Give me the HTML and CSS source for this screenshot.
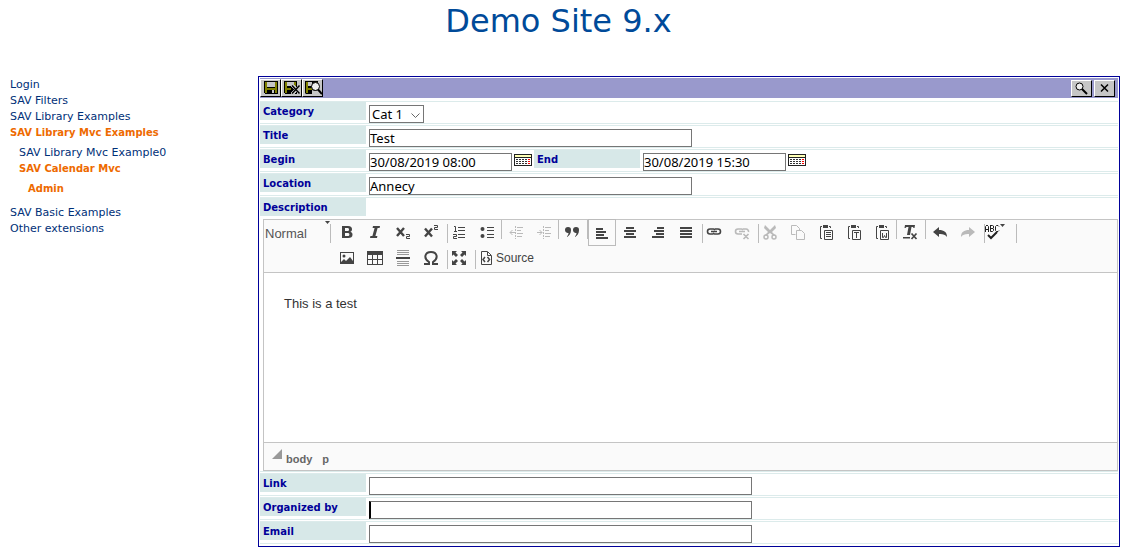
FILE: index.html
```html
<!DOCTYPE html>
<html lang="en">
<head>
<meta charset="utf-8">
<title>Demo Site 9.x</title>
<link rel="stylesheet" href="styles.css">
</head>
<body>
<header class="site-header"><h1>Demo Site 9.x</h1></header>
<div class="layout">
<nav class="menu">
  <ul>
    <li><a href="#">Login</a></li>
    <li><a href="#">SAV Filters</a></li>
    <li><a href="#">SAV Library Examples</a></li>
    <li><a href="#" class="active">SAV Library Mvc Examples</a>
      <ul>
        <li><a href="#">SAV Library Mvc Example0</a></li>
        <li><a href="#" class="active">SAV Calendar Mvc</a>
          <ul><li><a href="#" class="active">Admin</a></li></ul>
        </li>
      </ul>
    </li>
    <li><a href="#">SAV Basic Examples</a></li>
    <li><a href="#">Other extensions</a></li>
  </ul>
</nav>
<main class="panel">
<form>
  <div class="bar">
    <div class="bar-left">
      <button type="button" class="tool" aria-label="Save"><svg width="18" height="15" shape-rendering="crispEdges"><path d="M3 1h14v13H4l-1-1z"/><path fill="#808000" d="M4 2h2v6h8V2h2v11h-2V10H6v3H4z"/><path fill="#c6c6c6" d="M6 2h8v5H6zM11 10h2v3h-2z"/></svg></button>
      <button type="button" class="tool" aria-label="Save and close"><svg width="19" height="15" shape-rendering="crispEdges"><path d="M2 1h13v13H3l-1-1z"/><path fill="#808000" d="M3 2h2v6h7V2h2v6H9v2H5v3H3z"/><path fill="#c6c6c6" d="M5 2h7v4H5zM9 5h3l2 2 2-2h3v9h-3l-2-2-2 2H9v-2l3-3-3-2z"/><path fill="none" stroke="#000" stroke-width="1.500" shape-rendering="auto" d="M10 5.500l7.500 8M17.500 5.500l-7.500 8"/></svg></button>
      <button type="button" class="tool" aria-label="Save and show"><svg width="19" height="15"><path d="M2 1h13v13H3l-1-1z"/><path fill="#808000" d="M3 2h2v6h7V2h2v6H9v2H5v3H3z"/><path fill="#c6c6c6" d="M5 2h4v4H5zM9 10l3 1 3-1 3 3-1 2H9z"/><circle cx="12.500" cy="6.500" r="4" fill="#eee" stroke="#000"/><path stroke="#000" stroke-width="2" d="M15 9.500l4 4.500"/></svg></button>
    </div>
    <div class="bar-right">
      <button type="button" class="tool" aria-label="Show"><svg width="18" height="14"><circle cx="7.500" cy="5.500" r="3.500" fill="#eee" stroke="#000"/><path stroke="#000" stroke-width="2" d="M10 8l5 5"/></svg></button>
      <button type="button" class="tool" aria-label="Close"><svg width="18" height="14"><path fill="none" stroke="#000" stroke-width="1.500" d="M6 3.500l7 7M13 3.500l-7 7"/></svg></button>
    </div>
  </div>

  <div class="row"><label class="name" for="category">Category</label><span class="pick"><select id="category"><option>Cat 1</option></select><svg class="chevron" width="9" height="5"><path d="M.5.5l4 4 4-4" fill="none" stroke="#666"/></svg></span></div>
  <div class="row"><label class="name" for="title">Title</label><input class="field medium" id="title" value="Test"></div>
  <div class="row">
    <label class="name" for="begin">Begin</label><input class="field date" id="begin" value="30/08/2019 08:00">
    <button type="button" class="calendar" aria-label="Choose begin date"><svg width="18" height="12" shape-rendering="crispEdges"><path fill="#222" d="M0 0h18v12H0z"/><path fill="#ffffb5" d="M1 1h16v2H1z"/><path fill="#fff" d="M1 4h16v7H1z"/><path stroke="#333" stroke-dasharray="2 1" d="M2 5.500h12M2 7.500h12M2 9.500h12"/><path stroke="#f00" stroke-width="2" stroke-dasharray="1 1" d="M15 5v5"/></svg></button>
    <label class="name" for="end">End</label><input class="field date" id="end" value="30/08/2019 15:30">
    <button type="button" class="calendar" aria-label="Choose end date"><svg width="18" height="12" shape-rendering="crispEdges"><path fill="#222" d="M0 0h18v12H0z"/><path fill="#ffffb5" d="M1 1h16v2H1z"/><path fill="#fff" d="M1 4h16v7H1z"/><path stroke="#333" stroke-dasharray="2 1" d="M2 5.500h12M2 7.500h12M2 9.500h12"/><path stroke="#f00" stroke-width="2" stroke-dasharray="1 1" d="M15 5v5"/></svg></button>
  </div>
  <div class="row"><label class="name" for="location">Location</label><input class="field medium" id="location" value="Annecy"></div>
  <div class="row stacked">
    <span class="name" id="description">Description</span>
    <div class="editor">
      <div class="toolbar">
        <div class="format"><select aria-label="Paragraph format"><option>Normal</option></select><svg class="caret" width="5" height="3"><path fill="#444" d="M0 0h5L2.500 3z"/></svg></div>
        <div class="lines">
          <div class="line">
            <button type="button" aria-label="Bold"><svg viewBox="0 0 16 16"><path fill-rule="evenodd" d="M3 2h6c3 0 4 1.300 4 3.200 0 1.300-.7 2.200-1.700 2.600 1.400.4 2.200 1.400 2.200 2.900 0 2.200-1.600 3.300-4.300 3.300H3zm3 2v3h2.300c1.200 0 1.700-.5 1.700-1.500S9.500 4 8.300 4zm0 5v3h2.600c1.200 0 1.800-.5 1.800-1.500S9.800 9 8.600 9z"/></svg></button>
            <button type="button" aria-label="Italic"><svg viewBox="0 0 16 16"><path d="M6 2h7l-.4 2h-2L8.400 12h2l-.4 2H3l.4-2h2L7.600 4h-2z"/></svg></button>
            <button type="button" aria-label="Subscript"><svg viewBox="0 0 16 16"><path fill="none" stroke="#444" stroke-width="2.400" d="M2 4l7 8M9 4l-7 8"/><path class="thin" d="M11 10.500h3.500v2h-3v2H15"/></svg></button>
            <button type="button" aria-label="Superscript"><svg viewBox="0 0 16 16"><path fill="none" stroke="#444" stroke-width="2.400" d="M2 4.500l7 8M9 4.500l-7 8"/><path class="thin" d="M11 1.500h3.500v2h-3v2H15"/></svg></button>
            <span class="sep low"></span>
            <button type="button" aria-label="Numbered list"><svg viewBox="0 0 16 16"><path class="thin" d="M3 2.500h1.500V7M3 7.500h3M2 10.500h3.500v2h-3v2H6M7 3.500h7M7 6.500h7M7 10.500h7M7 13.500h7"/></svg></button>
            <button type="button" aria-label="Bulleted list"><svg viewBox="0 0 16 16"><circle cx="3.500" cy="5" r="2"/><circle cx="3.500" cy="12" r="2"/><path class="thin" d="M8 3.500h7M8 6.500h7M8 10.500h7M8 13.500h7"/></svg></button>
            <span class="sep"></span>
            <button type="button" disabled aria-label="Decrease indent"><svg viewBox="0 0 16 16"><path class="thin" d="M7.500 2v13" stroke-dasharray="2 1"/><path class="thin" d="M9 3.500h6M9 6.500h4M9 9.500h6M9 12.500h5M2 8.500h5M4.500 6L2 8.500 4.500 11"/></svg></button>
            <button type="button" disabled aria-label="Increase indent"><svg viewBox="0 0 16 16"><path class="thin" d="M7.500 2v13" stroke-dasharray="2 1"/><path class="thin" d="M9 3.500h6M9 6.500h4M9 9.500h6M9 12.500h5M1 8.500h5M3.500 6L6 8.500 3.500 11"/></svg></button>
            <span class="sep over"></span>
            <button type="button" aria-label="Block quote"><svg viewBox="0 0 16 16"><path d="M4 3a3 3 0 0 1 3 3.200c0 3.300-1.700 5.800-4.500 6.800 1.300-1.600 2-2.600 2-4A2.900 2.900 0 0 1 1 6a3 3 0 0 1 3-3zm8 0a3 3 0 0 1 3 3.200c0 3.300-1.700 5.800-4.500 6.800 1.300-1.600 2-2.600 2-4A2.900 2.900 0 0 1 9 6a3 3 0 0 1 3-3z"/></svg></button>
            <span class="sep edge"></span>
            <button type="button" class="on" aria-pressed="true" aria-label="Align left"><svg viewBox="0 0 16 16" shape-rendering="crispEdges"><path d="M2 3h7v2H2zM2 6h10v2H2zM2 9h8v2H2zM2 12h12v2H2z"/></svg></button>
            <button type="button" aria-label="Center"><svg viewBox="0 0 16 16" shape-rendering="crispEdges"><path d="M4 3h8v2H4zM2 6h12v2H2zM4 9h8v2H4zM2 12h12v2H2z"/></svg></button>
            <button type="button" aria-label="Align right"><svg viewBox="0 0 16 16" shape-rendering="crispEdges"><path d="M7 3h7v2H7zM4 6h10v2H4zM6 9h8v2H6zM2 12h12v2H2z"/></svg></button>
            <button type="button" aria-label="Justify"><svg viewBox="0 0 16 16" shape-rendering="crispEdges"><path d="M2 3h12v2H2zM2 6h12v2H2zM2 9h12v2H2zM2 12h12v2H2z"/></svg></button>
            <span class="sep low"></span>
            <button type="button" aria-label="Link"><svg viewBox="0 0 16 16"><path fill="none" stroke="#444" stroke-width="1.600" d="M7 10H4a2.500 2.500 0 0 1 0-5h3a2 2 0 0 1 2 1M9 5h3a2.500 2.500 0 0 1 0 5H9a2 2 0 0 1-2-1M5 7.500h6"/></svg></button>
            <button type="button" disabled aria-label="Unlink"><svg viewBox="0 0 16 16"><path fill="none" stroke="#444" stroke-width="1.600" d="M8 10H4a2.500 2.500 0 0 1 0-5h3a2 2 0 0 1 2 1M9 5h3a2.500 2.500 0 0 1 2.500 3M5 7.500h6M9.500 10l5 5M14.500 10l-5 5"/></svg></button>
            <span class="sep low"></span>
            <button type="button" disabled aria-label="Cut"><svg viewBox="0 0 16 16"><path d="M3 1l5 5 5-5 1 3-4 4 3 3-1 1-4-3-4 3-1-1 3-3-4-4z"/><circle cx="4" cy="13" r="2" fill="none" stroke="#444" stroke-width="1.500"/><circle cx="12" cy="13" r="2" fill="none" stroke="#444" stroke-width="1.500"/></svg></button>
            <button type="button" disabled aria-label="Copy"><svg viewBox="0 0 16 16"><path class="thin" d="M5.500 10.500h-4v-9h5l3 3v2M6.500 6.500h5l3 3v6h-8z"/></svg></button>
            <button type="button" aria-label="Paste"><svg viewBox="0 0 16 16"><path d="M5 1h5v3H5z"/><path class="thin" d="M4 2.500H2.500v12H4M11 2.500h1.500V4M6.500 6.500h8v9h-8zM8 8.500h5M8 10.500h5M8 12.500h5"/></svg></button>
            <button type="button" aria-label="Paste as plain text"><svg viewBox="0 0 16 16"><path d="M5 1h5v3H5z"/><path class="thin" d="M4 2.500H2.500v12H4M11 2.500h1.500V4M6.500 6.500h8v9h-8zM8 8.500h5M10.500 9v5"/></svg></button>
            <button type="button" aria-label="Paste from Word"><svg viewBox="0 0 16 16"><path d="M5 1h5v3H5z"/><path class="thin" d="M4 2.500H2.500v12H4M11 2.500h1.500V4M6.500 6.500h8v9h-8zM8.500 9v4.500h1l1-2 1 2h1V9"/></svg></button>
            <span class="sep tight"></span>
            <button type="button" aria-label="Remove format"><svg viewBox="0 0 16 16"><path d="M3 1h10l-.5 3h-1L11 3H9.500L8 11H5l1.500-8H4.500L3.500 4h-1zM1 13h7v1.500H1z"/><path fill="none" stroke="#444" stroke-width="1.700" d="M9.500 9.500l5 5.500M14.500 9.500l-5 5.500"/></svg></button>
            <span class="sep edge"></span>
            <button type="button" aria-label="Undo"><svg viewBox="0 0 16 16"><path d="M1 8l6-5v3c5 0 8 2 8 7-2-2.500-4-3.200-8-3v3z"/></svg></button>
            <button type="button" disabled aria-label="Redo"><svg viewBox="0 0 16 16"><path d="M15 8L9 3v3c-5 0-8 2-8 7 2-2.500 4-3.200 8-3v3z"/></svg></button>
            <span class="sep low"></span>
            <button type="button" class="spell" aria-label="Spell check"><svg class="wide" viewBox="0 0 22 16" fill="#222"><path class="dark" d="M1.500 8V2.500L3 1l1.500 1.500V8M1.500 5.500h3M6.500 1v6.500h2l1-1V5l-1-.5 1-.5V2l-1-.5h-2M7 4.500h2M15 2.500l-1-1h-1.500l-1 1v4l1 1H14l1-1"/><path d="M16 0h5l-2.500 3z"/><path fill="none" stroke="#222" stroke-width="2" d="M4 11l3 3 6-6"/></svg></button>
            <span class="sep low"></span>
          </div>
          <div class="line">
            <button type="button" aria-label="Image"><svg viewBox="0 0 16 16"><path fill-rule="evenodd" d="M1 2h14v12H1zm1 1v9l3-3 2 2 4-4 3 4V3z"/><circle cx="5" cy="6" r="1.500"/></svg></button>
            <button type="button" aria-label="Table"><svg viewBox="0 0 16 16" shape-rendering="crispEdges"><path fill-rule="evenodd" d="M0 1h16v14H0zm1 4v4h4V5zm5 0v4h4V5zm5 0v4h4V5zM1 10v4h4v-4zm5 0v4h4v-4zm5 0v4h4v-4z"/></svg></button>
            <button type="button" aria-label="Horizontal line"><svg viewBox="0 0 16 16" shape-rendering="crispEdges"><path fill="#999" d="M2 0h12v1H2zM2 2h12v1H2zM2 4h12v1H2zM2 11h12v1H2zM2 13h12v1H2zM2 15h12v1H2z"/><path d="M1 7h14v2H1z"/></svg></button>
            <button type="button" aria-label="Special character"><svg viewBox="0 0 16 16"><path fill="none" stroke="#444" stroke-width="2" d="M1 14h5v-2C0 8 2 2 8 2s8 6 2 10v2h5"/></svg></button>
            <span class="sep low"></span>
            <button type="button" aria-label="Maximize"><svg viewBox="0 0 16 16"><path d="M1 1h5L4.500 2.500 7 5 5 7 2.500 4.500 1 6zM15 1v5l-1.500-1.500L11 7 9 5l2.500-2.500L10 1zM1 15v-5l1.500 1.500L5 9l2 2-2.500 2.500L6 15zM15 15h-5l1.500-1.500L9 11l2-2 2.500 2.500L15 10z"/></svg></button>
            <span class="sep low"></span>
            <button type="button" class="source"><svg viewBox="0 0 16 16"><path class="thin" d="M3.500 1.500h6l4 4v9h-10zM9.500 2v3.500H13"/><path fill="none" stroke="#444" stroke-width="1.500" d="M7 7l-2 2.500L7 12M9.500 7l2 2.500-2 2.500"/></svg>Source</button>
          </div>
        </div>
      </div>
      <div class="content" contenteditable="true" role="textbox" aria-labelledby="description"><p>This is a test</p></div>
      <div class="path"><svg width="10" height="10"><path fill="#999" d="M10 0v10H0z"/></svg><a href="#">body</a><a href="#">p</a></div>
    </div>
  </div>
  <div class="row"><label class="name" for="link">Link</label><input class="field long" id="link"></div>
  <div class="row"><label class="name" for="organizer">Organized by</label><input class="field long caret-shown" id="organizer"></div>
  <div class="row"><label class="name" for="email">Email</label><input class="field long" id="email"></div>
</form>
</main>
</div>
</body>
</html>
```
FILE: styles.css
```css
* { box-sizing: border-box; }
body { margin: 0; background: #fff; font-family: Verdana, "DejaVu Sans", sans-serif; }
button, input, select { font: inherit; margin: 0; border-radius: 0; }
button { padding: 0; border: 0; background: none; }
svg { display: block; flex: none; }

.site-header { padding: 0 20px 0 8px; }
.site-header h1 { margin: 0; height: 76px; font-size: 32px; line-height: 43px; font-weight: 400; text-align: center; color: #004a99; }

.layout { display: flex; align-items: flex-start; padding-right: 9px; }
.menu { flex: 0 0 258px; padding-top: 1px; font-size: 11px; line-height: 16px; }
.menu ul { list-style: none; margin: 0; padding: 0 0 0 10px; }
.menu ul ul { padding: 4px 0 4px 9px; }
.menu li { line-height: 16px; }
.menu a { display: block; color: #003078; text-decoration: none; }
.menu .active { color: #ee6a00; font-size: 10px; font-weight: 700; }

.panel { flex: 1; min-width: 0; border: 1px solid #009; padding: 1px; }
.bar { display: flex; justify-content: space-between; height: 20px; margin-bottom: 3px; padding-top: 1px; background: #99c; }
.bar-left, .bar-right { display: flex; }
.bar-right { gap: 2px; padding: 1px 3px 0 0; }
.tool { display: flex; width: 21px; height: 17px; overflow: hidden; background: #c6c6c6; border: 1px solid; border-color: #fff #000 #000 #fff; }
.bar-left .tool { height: 18px; }

.row { display: flex; align-items: flex-start; min-height: 23px; margin-bottom: 1px; border: solid #dcebeb; border-width: 1px 0; }
.name { display: block; flex: 0 0 106px; height: 18px; padding-left: 3px; margin-right: 3px; background: #d7e8e8; color: #009; font-size: 10px; line-height: 20px; font-weight: 700; }
.field { display: block; height: 18px; margin-top: 3px; padding: 0; border: 1px solid #767676; background: #fff; color: #000; font-family: Tahoma, "Noto Sans", sans-serif; font-size: 13px; line-height: 16px; min-width: 0; }
.medium { width: 323px; }
.date { width: 143px; }
.long { width: 383px; }
.caret-shown { border-left: 2px solid #000; }
.calendar { margin: 4px 2px 0; }
.pick { position: relative; margin-top: 3px; }
.pick select { display: block; appearance: none; width: 55px; height: 18px; padding: 0 0 0 2px; border: 1px solid #767676; background: #fff; color: #000; font-family: Tahoma, "Noto Sans", sans-serif; font-size: 13px; line-height: 16px; }
.chevron { position: absolute; right: 4px; top: 8px; pointer-events: none; }

.stacked { flex-direction: column; align-items: stretch; }
.stacked .name { flex: none; width: 106px; }
.editor { margin: 3px 0 0 3px; border: 1px solid #c4c4c4; font-family: Arial, "Liberation Sans", sans-serif; color: #444; }
.toolbar { display: flex; min-height: 53px; background: #fafafa; border-bottom: 1px solid #c4c4c4; }
.format { position: relative; flex: none; width: 69px; height: 26px; }
.format select { display: block; appearance: none; width: 67px; height: 19px; margin-top: 4px; padding: 0 0 0 1px; border: 0; border-right: 1px solid #bbb; background: none; color: #555; font-size: 13px; line-height: 19px; }
.caret { position: absolute; right: 3px; top: 1px; pointer-events: none; }
.line { display: flex; height: 26px; }
.line button { display: flex; flex: none; align-items: center; justify-content: center; width: 28px; height: 24px; color: #444; }
.line svg { width: 16px; height: 16px; fill: #444; }
.line .wide { width: 22px; }
.thin { fill: none; stroke: #444; stroke-width: 1px; }
.dark { fill: none; stroke: #222; stroke-width: 1px; }
.line button:disabled { opacity: .35; }
.line .on { border: 1px solid #bbb; margin-top: -1px; height: 27px; }
.line .spell { justify-content: flex-start; padding-left: 2px; width: 30px; margin-right: 2px; }
.line .source { width: auto; padding-left: 5px; gap: 2px; font-size: 12px; }
.sep { flex: none; width: 1px; height: 19px; background: #bbb; }
.low { margin: 4px -3px 0 2px; }
.over { margin-right: -1px; }
.edge { margin-left: 1px; }
.tight { margin-right: -1px; }
.content { min-height: 169px; padding: 20px; background: #fff; color: #333; font-size: 13px; line-height: 21px; }
.content p { margin: 0; }
.path { display: flex; height: 28px; padding: 6px 0 0 8px; background: #fafafa; border-top: 1px solid #c4c4c4; font-size: 11px; line-height: 20px; font-weight: 700; }
.path a { margin: 0 6px 0 4px; color: #666; text-decoration: none; }
```
